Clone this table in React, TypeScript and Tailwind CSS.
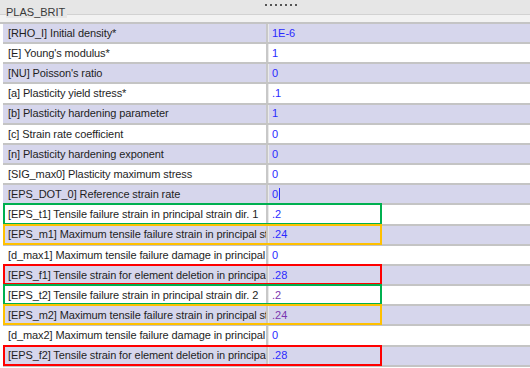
import React from "react";

type Row = { label: string; value: string; box?: "green" | "orange" | "red"; purple?: boolean; cursor?: boolean };

const rows: Row[] = [
  { label: "[RHO_I] Initial density*", value: "1E-6" },
  { label: "[E] Young's modulus*", value: "1" },
  { label: "[NU] Poisson's ratio", value: "0" },
  { label: "[a] Plasticity yield stress*", value: ".1" },
  { label: "[b] Plasticity hardening parameter", value: "1" },
  { label: "[c] Strain rate coefficient", value: "0" },
  { label: "[n] Plasticity hardening exponent", value: "0" },
  { label: "[SIG_max0] Plasticity maximum stress", value: "0" },
  { label: "[EPS_DOT_0] Reference strain rate", value: "0", cursor: true },
  { label: "[EPS_t1] Tensile failure strain in principal strain dir. 1", value: ".2", box: "green" },
  { label: "[EPS_m1] Maximum tensile failure strain in principal strain dir. 1", value: ".24", box: "orange" },
  { label: "[d_max1] Maximum tensile failure damage in principal strain dir. 1", value: "0" },
  { label: "[EPS_f1] Tensile strain for element deletion in principal strain dir. 1", value: ".28", box: "red" },
  { label: "[EPS_t2] Tensile failure strain in principal strain dir. 2", value: ".2", box: "green", purple: true },
  { label: "[EPS_m2] Maximum tensile failure strain in principal strain dir. 2", value: ".24", box: "orange", purple: true },
  { label: "[d_max2] Maximum tensile failure damage in principal strain dir. 2", value: "0" },
  { label: "[EPS_f2] Tensile strain for element deletion in principal strain dir. 2", value: ".28", box: "red" },
];

const boxClass: Record<string, string> = {
  green: "border-[#00b050]",
  orange: "border-[#ffc000]",
  red: "border-[#ff0000]",
};

export default function App() {
  return (
    <div
      className="w-[530px] h-[368px] overflow-hidden bg-white flex flex-col text-[11px] text-[#1e1e1e]"
      style={{ fontFamily: "Tahoma, 'Liberation Sans', Arial, sans-serif" }}
    >
      {/* header */}
      <div className="h-[22px] shrink-0 flex items-start pt-[6px] bg-[linear-gradient(to_bottom,#e6e6e6_0px,#e6e6e6_14px,#d2d2d2_14px,#d2d2d2_15px,#f2f2f2_15px)]">
        <div className="ml-[6px] leading-[13px] text-[#3a3a3a] w-[259px]">
          <span className="bg-[#e6e6e6] pr-[2px]">PLAS_BRIT</span>
        </div>
        <div className="flex gap-[3px] -mt-[2px]">
          {[0, 1, 2, 3, 4, 5, 6].map((i) => (
            <div key={i} className="w-[2px] h-[2px] bg-[#555]" />
          ))}
        </div>
      </div>
      {/* rows */}
      <div className="pl-[3px] border-t-2 border-[#c4c4c4] flex flex-col">
        {rows.map((r, i) => {
          const bg = i % 2 === 0 ? "bg-[#d6d6ec]" : "bg-white";
          return (
            <div key={i} className={`relative flex h-[20.17px] border-b-2 border-[#c4c4c4] ${bg}`}>
              <div className="w-[265px] shrink-0 overflow-hidden whitespace-nowrap pl-[5px] flex items-center border-r-2 border-[#c8c8c8] tracking-[-0.1px]">
                {r.label}
              </div>
              <div className={`flex-1 flex items-center pl-[3px] border-l border-[#eaeaea] ${r.purple ? "text-[#7a36b0]" : "text-[#2a2aff]"}`}>
                {r.value}
                {r.cursor && <span className="inline-block w-px h-[12px] bg-[#2a2aff] ml-px" />}
              </div>
              {r.box && (
                <div className={`absolute left-0 top-[-2px] bottom-[-1px] w-[379px] border-2 ${boxClass[r.box]} pointer-events-none`} />
              )}
            </div>
          );
        })}
      </div>
    </div>
  );
}
